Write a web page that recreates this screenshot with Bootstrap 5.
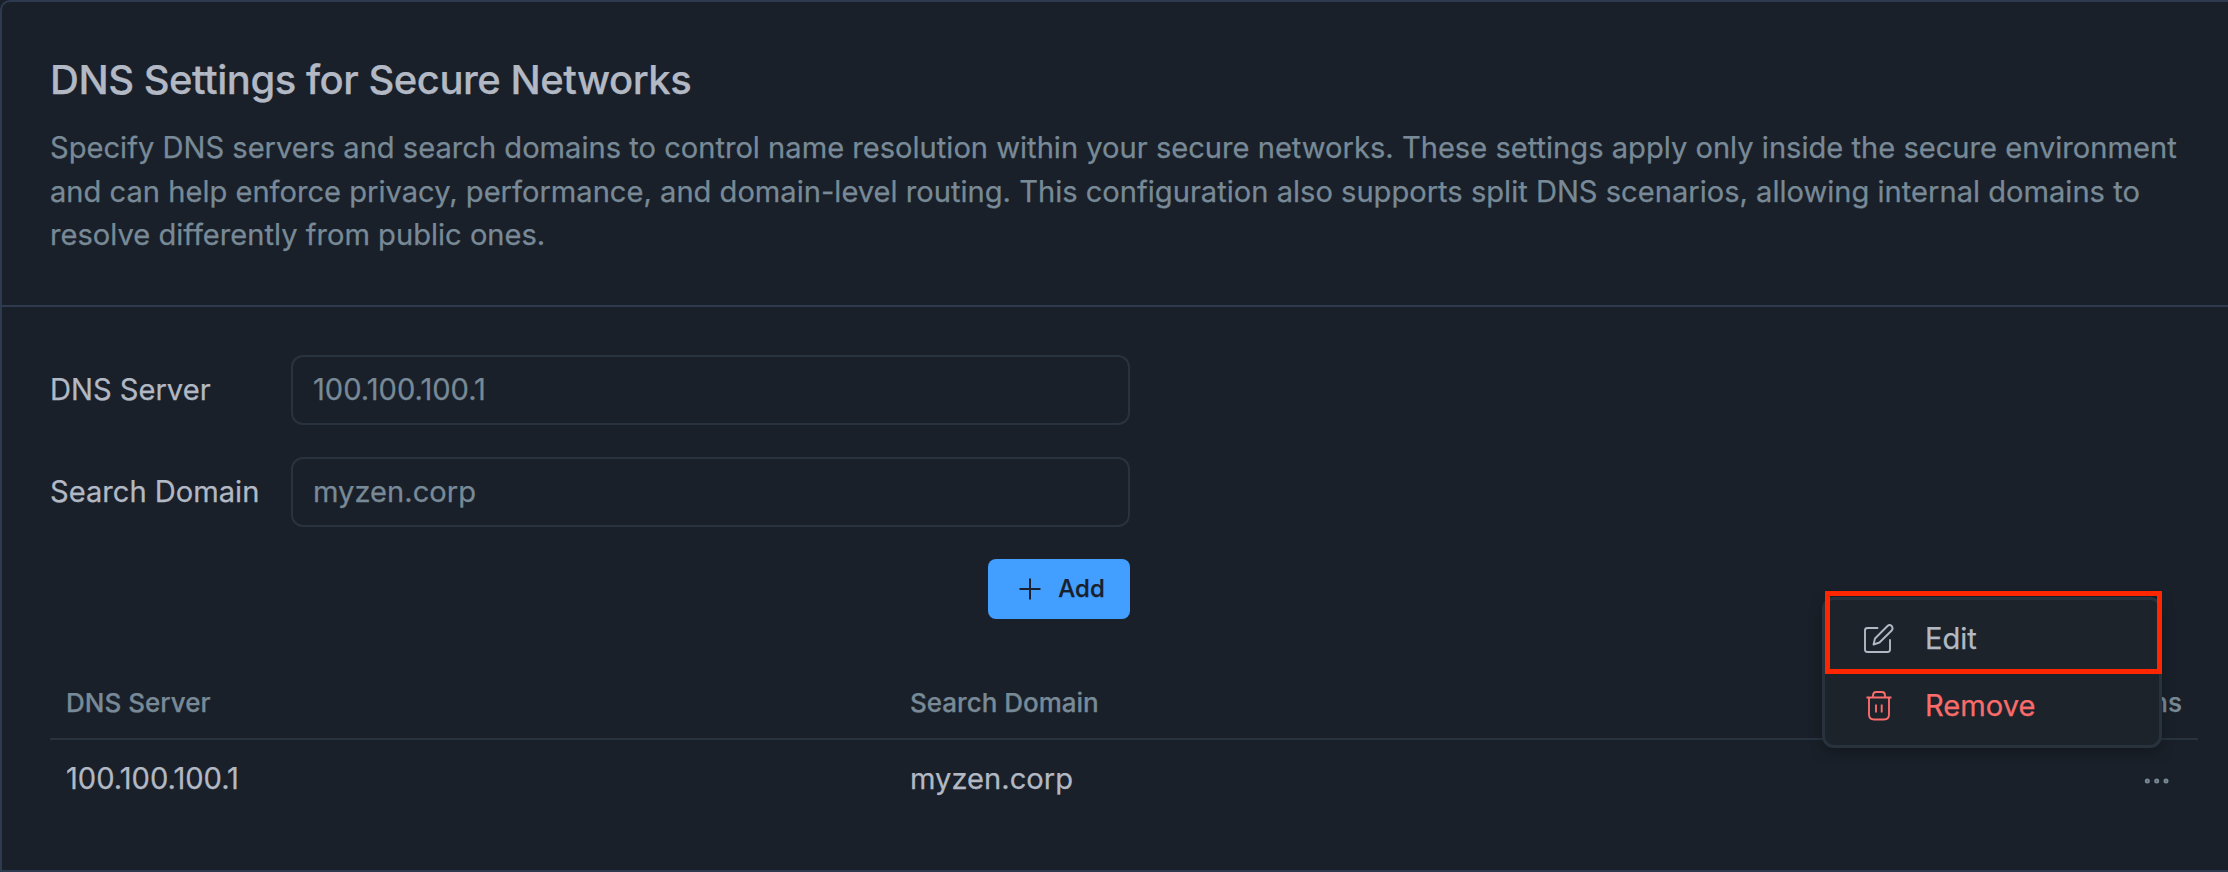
<!DOCTYPE html>
<html lang="en" data-bs-theme="dark">
<head>
<meta charset="utf-8">
<title>DNS Settings</title>
<link href="https://cdn.jsdelivr.net/npm/bootstrap@5.3.0/dist/css/bootstrap.min.css" rel="stylesheet">
<style>
body{background:#1a2029;color:#b2b9c4;font-family:Inter,sans-serif;font-size:29.12px;line-height:43.5px;overflow:hidden;-webkit-text-stroke:.25px}
.dns-panel{height:872px;border:2px solid #2e3a4f;border-right:0;border-radius:10px 0 0 0}
.dns-head{height:305px;padding:52px 48px 0 48px;border-bottom:2px solid #2e3a4f}
.dns-head h1{font-size:40px;line-height:52px;font-weight:500;letter-spacing:-.48px;color:#b2b9c4;margin:0 0 20px}
.quiet{color:#788a97}
.dns-body{padding:48px 30px 0 48px}
.dns-form{width:1080px;gap:32px}
.dns-form label{width:241px}
.dns-form .form-control{height:70px;border:2px solid #28333f;border-radius:12px;background:transparent;color:#788a97;font-size:29.12px;padding:0 20px 2px}
.dns-form .btn{width:142px;height:60px;background:#429eff;color:#1a2029;border:0;border-radius:8px;font-size:24px;font-weight:500;padding:0 0 0 6px;gap:17px}
.dns-table{width:2148px;table-layout:fixed;margin-top:61px;--bs-table-bg:transparent;--bs-table-color:#b2b9c4;border-color:#28333f}
.dns-table .wide-col{width:844px}
.dns-table th{font-size:26px;font-weight:500;color:#788a97;height:59px;padding:0 16px 19px;line-height:32px;border-bottom:2px solid #28333f;vertical-align:bottom}
.dns-table td{height:80px;padding:0 16px 1px;border:0;vertical-align:middle}
.row-menu{left:1822px;top:597px;width:340px;height:151px;background:#1c232b;border:3px solid #28323d;border-radius:12px;box-shadow:0 4px 14px rgba(0,0,0,.25);padding:5px 0 0 37px}
.row-menu .entry{height:67px}
.row-menu svg{margin-right:29px}
.danger-entry{color:#f96c6c}
.marker{left:1825px;top:591px;width:337px;height:83px;border:5px solid #ff2600}
</style>
</head>
<body>
<main class="dns-panel">
<header class="dns-head">
<h1>DNS Settings for Secure Networks</h1>
<p class="quiet mb-0">Specify DNS servers and search domains to control name resolution within your secure networks. These settings apply only inside the secure environment and can help enforce privacy, performance, and domain-level routing. This configuration also supports split DNS scenarios, allowing internal domains to resolve differently from public ones.</p>
</header>
<section class="dns-body">
<form class="dns-form d-flex flex-column">
<div class="d-flex align-items-center"><label for="srv" class="flex-shrink-0">DNS Server</label><input id="srv" class="form-control" value="100.100.100.1"></div>
<div class="d-flex align-items-center"><label for="dom" class="flex-shrink-0">Search Domain</label><input id="dom" class="form-control" value="myzen.corp"></div>
<button type="button" class="btn d-flex align-items-center justify-content-center align-self-end"><svg width="22" height="22" viewBox="0 0 22 22" stroke="currentColor" stroke-width="2"><path d="M11 .5v21M.5 11h21"/></svg>Add</button>
</form>
<table class="table dns-table mb-0">
<colgroup><col class="wide-col"><col class="wide-col"><col></colgroup>
<thead><tr><th>DNS Server</th><th>Search Domain</th><th class="text-end">Actions</th></tr></thead>
<tbody><tr><td>100.100.100.1</td><td>myzen.corp</td><td class="text-end"><svg class="quiet me-2" width="36" height="8" viewBox="0 0 36 8" fill="none" stroke="currentColor" stroke-width="2"><circle cx="9.300" cy="4" r="1.5"/><circle cx="18.700" cy="4" r="1.5"/><circle cx="28" cy="4" r="1.5"/></svg></td></tr></tbody>
</table>
</section>
</main>
<div class="row-menu position-absolute">
<div class="entry d-flex align-items-center"><svg width="34" height="34" viewBox="0 0 34 34" fill="none" stroke="currentColor" stroke-width="1.900" stroke-linejoin="round" stroke-linecap="round"><path d="M15.500 6H5.500Q3 6 3 8.500V27.500Q3 30 5.500 30H25.500Q28 30 28 27.500V18M11.500 22.500l1.500-6L25.500 4Q27.500 2 29.700 4Q31.500 6.500 29.700 8.500L17.500 20.500Z"/></svg>Edit</div>
<div class="entry d-flex align-items-center danger-entry"><svg width="34" height="34" viewBox="0 0 34 34" fill="none" stroke="currentColor" stroke-width="1.900"><path d="M4.500 8.500h25M11 8.500V6.500Q11 3 14 3H20Q23 3 23 6.500V8.500M7 8.500V25.500Q7 30.500 12 30.500H22Q27 30.500 27 25.500V8.500M14 15.500v8M19.700 15.500v8"/></svg>Remove</div>
</div>
<div class="marker position-absolute"></div>
<script src="https://cdn.jsdelivr.net/npm/bootstrap@5.3.0/dist/js/bootstrap.bundle.min.js"></script>
</body>
</html>
